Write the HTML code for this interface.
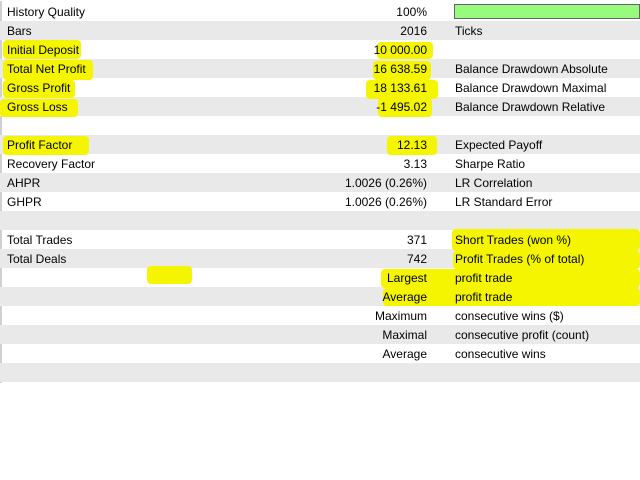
<!DOCTYPE html>
<html><head><style>
body{margin:0;width:640px;height:480px;background:#fff;position:relative;overflow:hidden;font-family:"Liberation Sans",sans-serif;font-size:12px;color:#000}
#w{position:absolute;left:0;top:1px;width:640px;height:479px}
.r{position:absolute;left:0;width:640px;height:19px}
.g{background:#e9e9e9}
.t{position:absolute;line-height:19px;white-space:nowrap}
.l{left:7px}.v{right:213px;text-align:right}.c{left:455px}
.h{position:absolute;background:#f5f500;border-radius:4px}
</style></head><body><div id="w">
<div style="position:absolute;left:0;top:0;width:2px;height:382px;background:#d0d0d0"></div>
<div class="r g" style="top:20px"></div><div class="r g" style="top:58px"></div><div class="r g" style="top:96px"></div>
<div class="r g" style="top:134px"></div><div class="r g" style="top:172px"></div><div class="r g" style="top:210px"></div>
<div class="r g" style="top:248px"></div><div class="r g" style="top:286px"></div><div class="r g" style="top:324px"></div><div class="r g" style="top:362px"></div>
<div class="h" style="left:3px;top:39px;width:78px;height:19px"></div>
<div class="h" style="left:3px;top:59px;width:90px;height:20px"></div>
<div class="h" style="left:3px;top:79px;width:72px;height:18px"></div>
<div class="h" style="left:0px;top:98px;width:78px;height:18px"></div>
<div class="h" style="left:3px;top:135px;width:86px;height:19px"></div>
<div class="h" style="left:377px;top:41px;width:56px;height:17px"></div>
<div class="h" style="left:373px;top:60px;width:58px;height:19px"></div>
<div class="h" style="left:366px;top:79px;width:72px;height:19px"></div>
<div class="h" style="left:378px;top:97px;width:54px;height:19px"></div>
<div class="h" style="left:387px;top:135px;width:50px;height:19px"></div>
<div class="h" style="left:452px;top:228px;width:188px;height:22px"></div>
<div class="h" style="left:453px;top:250px;width:187px;height:18px"></div>
<div class="h" style="left:381px;top:268px;width:259px;height:19px"></div>
<div class="h" style="left:383px;top:287px;width:257px;height:18px"></div>
<div class="h" style="left:147px;top:265px;width:45px;height:18px"></div>
<div style="position:absolute;left:454px;top:3px;width:186px;height:15px;border:1px solid #666;background:#98fb7e;box-sizing:border-box"></div>
<div class="t l" style="top:2px">History Quality</div><div class="t v" style="top:2px">100%</div>
<div class="t l" style="top:21px">Bars</div><div class="t v" style="top:21px">2016</div><div class="t c" style="top:21px">Ticks</div>
<div class="t l" style="top:40px">Initial Deposit</div><div class="t v" style="top:40px">10 000.00</div>
<div class="t l" style="top:59px">Total Net Profit</div><div class="t v" style="top:59px">16 638.59</div><div class="t c" style="top:59px">Balance Drawdown Absolute</div>
<div class="t l" style="top:78px">Gross Profit</div><div class="t v" style="top:78px">18 133.61</div><div class="t c" style="top:78px">Balance Drawdown Maximal</div>
<div class="t l" style="top:97px">Gross Loss</div><div class="t v" style="top:97px">-1 495.02</div><div class="t c" style="top:97px">Balance Drawdown Relative</div>
<div class="t l" style="top:135px">Profit Factor</div><div class="t v" style="top:135px">12.13</div><div class="t c" style="top:135px">Expected Payoff</div>
<div class="t l" style="top:154px">Recovery Factor</div><div class="t v" style="top:154px">3.13</div><div class="t c" style="top:154px">Sharpe Ratio</div>
<div class="t l" style="top:173px">AHPR</div><div class="t v" style="top:173px">1.0026 (0.26%)</div><div class="t c" style="top:173px">LR Correlation</div>
<div class="t l" style="top:192px">GHPR</div><div class="t v" style="top:192px">1.0026 (0.26%)</div><div class="t c" style="top:192px">LR Standard Error</div>
<div class="t l" style="top:230px">Total Trades</div><div class="t v" style="top:230px">371</div><div class="t c" style="top:230px">Short Trades (won %)</div>
<div class="t l" style="top:249px">Total Deals</div><div class="t v" style="top:249px">742</div><div class="t c" style="top:249px">Profit Trades (% of total)</div>
<div class="t v" style="top:268px">Largest</div><div class="t c" style="top:268px">profit trade</div>
<div class="t v" style="top:287px">Average</div><div class="t c" style="top:287px">profit trade</div>
<div class="t v" style="top:306px">Maximum</div><div class="t c" style="top:306px">consecutive wins ($)</div>
<div class="t v" style="top:325px">Maximal</div><div class="t c" style="top:325px">consecutive profit (count)</div>
<div class="t v" style="top:344px">Average</div><div class="t c" style="top:344px">consecutive wins</div>
</div></body></html>
